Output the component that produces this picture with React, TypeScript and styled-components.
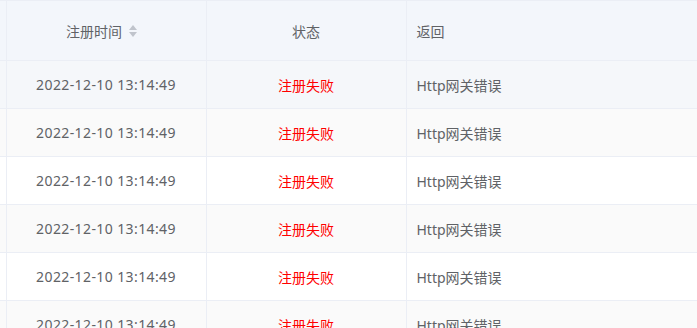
import React from 'react';
import styled, { createGlobalStyle } from 'styled-components';

const GlobalStyle = createGlobalStyle`
  html, body {
    margin: 0;
    padding: 0;
    background: #fff;
  }
  body {
    font-family: "Noto Sans", "Noto Sans CJK SC", sans-serif;
  }
`;

const Table = styled.table`
  width: 697px;
  border-collapse: collapse;
  table-layout: fixed;
  font-size: 14px;
  color: #606266;
  border-top: 1px solid #ebeef5;
`;

const HeadCell = styled.th<{ $align?: 'left' | 'center' }>`
  height: 59px;
  padding: 0 10px;
  font-weight: normal;
  text-align: ${(p) => p.$align || 'center'};
  background: #f3f6fb;
  border-right: 1px solid #ebeef5;
  border-bottom: 1px solid #ebeef5;
  white-space: nowrap;
  overflow: hidden;
  &:last-child {
    border-right: none;
  }
`;

const Row = styled.tr<{ $bg: string }>`
  background: ${(p) => p.$bg};
`;

const Cell = styled.td<{ $align?: 'left' | 'center'; $danger?: boolean }>`
  height: 47px;
  padding: 0 10px;
  text-align: ${(p) => p.$align || 'center'};
  color: ${(p) => (p.$danger ? '#ff0000' : '#606266')};
  border-right: 1px solid #ebeef5;
  border-bottom: 1px solid #ebeef5;
  white-space: nowrap;
  overflow: hidden;
  &:last-child {
    border-right: none;
  }
`;

const TimeText = styled.span`
  letter-spacing: 0.4px;
`;

const SortLabel = styled.span`
  display: inline-flex;
  align-items: center;
`;

const CaretWrapper = styled.span`
  display: inline-flex;
  width: 24px;
  padding-left: 7px;
  box-sizing: border-box;
`;

const SortIcon = styled.svg`
  width: 8px;
  height: 12px;
  fill: #c0c4cc;
`;

const rowColors = ['#f5f7fa', '#fafafa', '#ffffff', '#fafafa', '#ffffff', '#fafafa'];

export default function App() {
  const rows = rowColors.map((bg, i) => ({
    id: i,
    bg,
    time: '2022-12-10 13:14:49',
    status: '注册失败',
    reply: 'Http网关错误',
  }));
  return (
    <>
      <GlobalStyle />
      <Table>
        <colgroup>
          <col style={{ width: 6 }} />
          <col style={{ width: 200 }} />
          <col style={{ width: 200 }} />
          <col />
        </colgroup>
        <thead>
          <tr>
            <HeadCell />
            <HeadCell>
              <SortLabel>
                注册时间
                <CaretWrapper>
                  <SortIcon viewBox="0 0 8 12">
                    <path d="M4 0 L8 5 H0 Z" />
                    <path d="M4 12 L8 7 H0 Z" />
                  </SortIcon>
                </CaretWrapper>
              </SortLabel>
            </HeadCell>
            <HeadCell>状态</HeadCell>
            <HeadCell $align="left">返回</HeadCell>
          </tr>
        </thead>
        <tbody>
          {rows.map((r) => (
            <Row key={r.id} $bg={r.bg}>
              <Cell />
              <Cell>
                <TimeText>{r.time}</TimeText>
              </Cell>
              <Cell $danger>{r.status}</Cell>
              <Cell $align="left">{r.reply}</Cell>
            </Row>
          ))}
        </tbody>
      </Table>
    </>
  );
}
